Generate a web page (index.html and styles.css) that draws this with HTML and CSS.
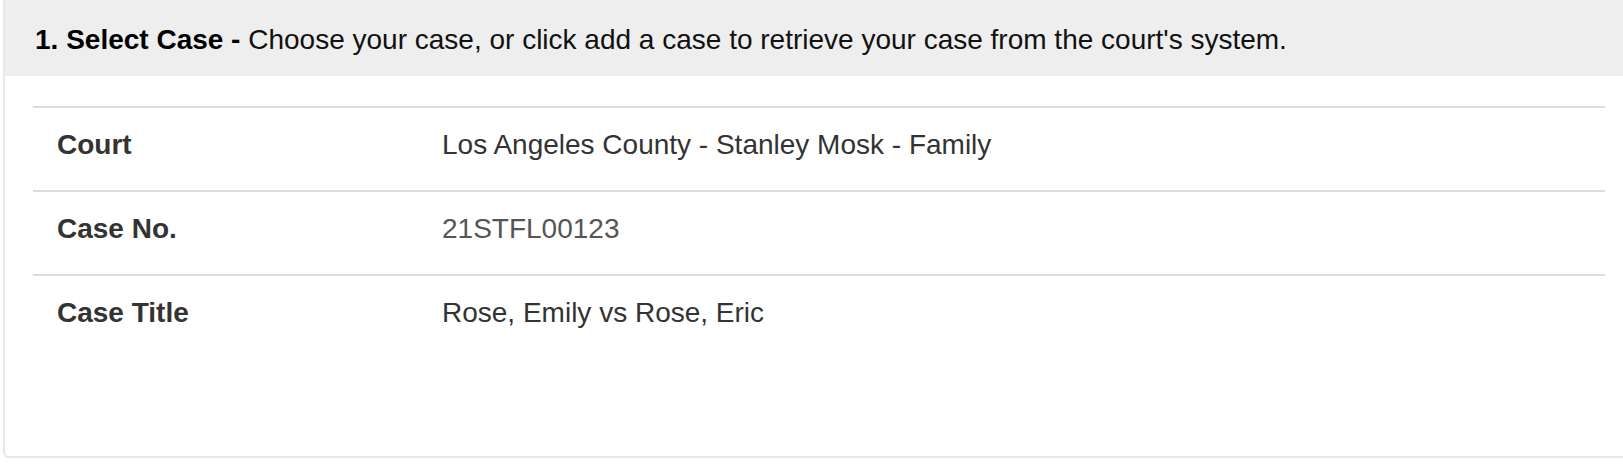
FILE: index.html
```html
<!DOCTYPE html>
<html>
<head>
<meta charset="utf-8">
<link rel="stylesheet" href="styles.css">
</head>
<body>
<div class="panel">
  <div class="panel-head"><strong>1. Select Case -</strong> Choose your case, or click add a case to retrieve your case from the court's system.</div>
  <div class="panel-body">
    <div class="row">
      <div class="label">Court</div>
      <div class="value">Los Angeles County - Stanley Mosk - Family</div>
    </div>
    <div class="row">
      <div class="label">Case No.</div>
      <div class="value muted">21STFL00123</div>
    </div>
    <div class="row last">
      <div class="label">Case Title</div>
      <div class="value">Rose, Emily vs Rose, Eric</div>
    </div>
  </div>
</div>
</body>
</html>
```
FILE: styles.css
```css
html, body {
  margin: 0;
  padding: 0;
  background: #fff;
}
body {
  font-family: "Liberation Sans", Arial, sans-serif;
  color: #333;
  padding: 0 0 0 3px;
}
.panel {
  border: 2px solid #e8e8e8;
  border-top: none;
  border-right: none;
  border-radius: 0 0 0 6px;
  height: 458px;
  box-sizing: border-box;
  overflow: hidden;
}
.panel-head {
  background: #eeeeee;
  height: 76px;
  box-sizing: border-box;
  padding: 26px 0 0 30px;
  font-size: 28px;
  line-height: 28px;
  color: #111;
}
.panel-head strong {
  color: #000;
}
.panel-body {
  padding: 30px 18px 0 28px;
}
.row {
  display: grid;
  grid-template-columns: 409px 1fr;
  border-top: 2px solid #dcdcdc;
  height: 84px;
  box-sizing: border-box;
  padding-bottom: 8px;
  align-items: center;
  font-size: 28px;
  line-height: 32px;
}
.label {
  font-weight: bold;
  padding-left: 24px;
  color: #333;
}
.value {
  color: #333;
}
.value.muted {
  color: #555;
}
```
